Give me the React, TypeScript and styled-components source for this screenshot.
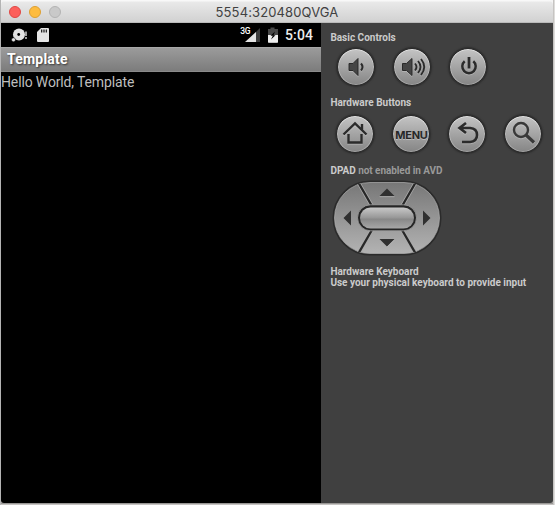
import React from "react";
import styled, { createGlobalStyle } from "styled-components";

const GlobalStyle = createGlobalStyle`
  html, body, #root { margin: 0; width: 555px; height: 505px; overflow: hidden; }
  body { background: #b9b8b6; font-family: Roboto, sans-serif; }
  * { box-sizing: border-box; }
  svg { display: block; }
`;

const Desktop = styled.div`
  width: 555px;
  height: 505px;
  padding: 0 2px 2px 1px;
  background: linear-gradient(90deg, #b4b4b4 0 1px, transparent 1px 553px, #c6c4c2 553px 554px, #dedddb 554px),
    linear-gradient(#f5f5f5 0 8px, #aaa8a6 12px 503px, #999795 503px 504px, #c5c3c1 504px);
`;

const Window = styled.main`
  height: 503px;
  display: flex;
  flex-direction: column;
  border-radius: 5px 5px 3px 3px;
  overflow: hidden;
`;

const TitleBar = styled.header`
  position: relative;
  flex: 0 0 23px;
  height: 23px;
  min-height: 0;
  display: flex;
  justify-content: center;
  line-height: 24px;
  background: linear-gradient(#f8f8f8 0 1px, #e9e9e9 2px, #d1d1d1 22px, #bababa 22px);
  color: #414141;
  font-family: Inter, sans-serif;
  font-size: 13px;
`;

const Lights = styled.div`
  position: absolute;
  left: 8px;
  top: 6px;
  display: flex;
  gap: 8px;
`;

const Light = styled.i<{ $fill: string; $edge: string }>`
  width: 12px;
  height: 12px;
  border-radius: 50%;
  background: ${(p) => p.$fill};
  border: 1px solid ${(p) => p.$edge};
`;

const WindowTitle = styled.span`
  letter-spacing: 0.12px;
`;

const Body = styled.div`
  flex: 1;
  display: flex;
`;

const Phone = styled.section`
  width: 320px;
  background: #000;
`;

const StatusBar = styled.div`
  height: 24px;
  display: flex;
  align-items: center;
  justify-content: space-between;
  padding: 0 8px 0 10px;
`;

const StatusGroup = styled.div`
  display: flex;
  align-items: center;
`;

const Clock = styled.span`
  margin-left: 6px;
  color: #ececec;
  font-size: 14px;
  font-weight: 500;
  line-height: 24px;
  letter-spacing: 0.1px;
`;

const AppTitle = styled.div`
  height: 25px;
  padding-left: 6px;
  line-height: 25px;
  color: #fff;
  font-size: 14px;
  font-weight: 700;
  letter-spacing: 0.2px;
  text-shadow: 1px 1px 2px #333;
  background: linear-gradient(#a8a8a8 0 1px, #9b9b9b 1px, #7c7c7c 24px, #8a8a8a 24px);
`;

const Message = styled.p`
  margin: 0;
  color: #bebebe;
  font-size: 14px;
  line-height: 20px;
  letter-spacing: -0.14px;
`;

const Controls = styled.aside`
  flex: 1;
  padding: 9px 0 0 9.4px;
  background: #404040;
  color: #cbcbcb;
  font-size: 10px;
  font-weight: 700;
  line-height: 12px;
`;

const Heading = styled.div`
  height: 12px;
  white-space: nowrap;
`;

const KeyboardNote = styled.div`
  line-height: 11px;
  white-space: nowrap;
`;

const Muted = styled.span`
  color: #999;
  font-weight: 700;
  letter-spacing: -0.07px;
`;

const ButtonRow = styled.div<{ $indent: number; $top: number; $bottom: number }>`
  display: flex;
  gap: 18px;
  padding: ${(p) => p.$top}px 0 ${(p) => p.$bottom}px ${(p) => p.$indent}px;
`;

const RoundButton = styled.button`
  flex: 0 0 38px;
  height: 38px;
  padding: 0;
  display: grid;
  place-items: center;
  border-radius: 50%;
  color: #272727;
  font: 700 11px Inter, sans-serif;
  background: linear-gradient(#c4c4c4, #858585) padding-box;
  border: 1px solid #2a2a2a;
  box-shadow: inset 0 0 0 1px #ffffff40, inset 0 1px 0 #ffffff60, 0 0 2px 0.5px #202020;
`;

const MenuLabel = styled.span`
  letter-spacing: -0.25px;
  line-height: 14px;
  padding-top: 2px;
  text-shadow: 0 1px 0 #bbb;
`;

const PadBlock = styled.div`
  padding: 2px 0 10px 0.6px;
`;

const GlyphSvg = styled.svg`
  filter: drop-shadow(0 1px 0 #ffffff38);
`;

const Glyph = ({ kind }: { kind: "low" | "high" | "power" | "home" | "back" | "search" }) => (
  <GlyphSvg width="36" height="36" viewBox="0 0 36 36" fill="none" stroke="#2b2b2b" strokeWidth="2">
    {kind === "low" && (
      <>
        <path d="M11 14.5h4l5-5v17l-5-5h-4z" fill="#454545" stroke="#292929" strokeWidth="1" />
        <path d="M23 14.5q3 3.5 0 7" />
      </>
    )}
    {kind === "high" && (
      <>
        <path d="M8.5 14.5h4l5.5-5v17l-5.5-5h-4z" fill="#454545" stroke="#292929" strokeWidth="1" />
        <path d="M21 14.5q3 3.5 0 7M24 12q5 6 0 12M27 10q6.5 8 0 16" strokeWidth="1.9" />
      </>
    )}
    {kind === "power" && (
      <>
        <path d="M14.7 12.3a6.7 6.7 0 1 0 8.6 0" strokeWidth="2.5" />
        <path d="M19 8v11.5" strokeWidth="2.8" />
      </>
    )}
    {kind === "home" && <path d="M6.5 18.5 18 7.5l11.5 11M11.5 18v8.5h13V18M25 8v5.5" strokeWidth="2.4" />}
    {kind === "back" && <path d="m17 7-6.5 5 6.5 5M11 12h10q7 .5 7 7t-7 7h-8" strokeWidth="2.6" />}
    {kind === "search" && (
      <>
        <circle cx="16" cy="14" r="7" strokeWidth="2.4" stroke="#393939" />
        <path d="m21 19 8 7.5" strokeWidth="3.2" stroke="#393939" />
      </>
    )}
  </GlyphSvg>
);

const DebugIcon = () => (
  <svg width="18" height="14" viewBox="0 0 18 14">
    <circle cx="8" cy="6.5" r="6" fill="#e2e2e2" />
    <circle cx="7.7" cy="6.5" r="1.4" fill="#000" />
    <circle cx="2.5" cy="11.8" r="2" fill="#e2e2e2" stroke="#000" strokeWidth=".5" />
    <path d="M15 3.5v4.5M15 9v2" stroke="#e2e2e2" strokeWidth="1.4" />
  </svg>
);

const CardIcon = () => (
  <svg width="22" height="14" viewBox="0 0 22 14">
    <path d="M12 0h7q1 0 1 1v12q0 1-1 1H9q-1 0-1-1V4z" fill="#e5e5e5" />
    <path d="M12.7 1.5v3M15 1.5v3M17.3 1.5v3" stroke="#111" strokeWidth="1.2" />
  </svg>
);

const NetworkLabel = styled.span`
  align-self: flex-start;
  margin: 3px -5px 0 0;
  color: #fff;
  font: 500 8.5px/10px Roboto, sans-serif;
  letter-spacing: -0.4px;
`;

const SignalIcon = () => (
  <svg width="16" height="14" viewBox="0 0 16 14">
    <path d="M15 0v14H1z" fill="#3c3c3c" />
    <path d="M11 4v10H0z" fill="#e3e3e3" />
  </svg>
);

const BatteryIcon = () => (
  <svg width="18" height="16" viewBox="0 0 18 16">
    <path d="M7 2h2.5V.5h4V2H17v13q0 .7-.7.7H7.7Q7 15.7 7 15z" fill="#484848" />
    <path d="M7 8h10v7q0 .7-.7.7H7.7Q7 15.7 7 15z" fill="#eee" />
    <path d="m14 4.5-4.5 4.3h2.3L10 12.5l4.5-4.3h-2z" fill="#000" />
  </svg>
);

const DPad = () => (
  <svg width="112" height="77" viewBox="0 0 112 77">
    <defs>
      <linearGradient id="padFace" x2="0" y2="1">
        <stop stopColor="#777" />
        <stop offset="1" stopColor="#b3b3b3" />
      </linearGradient>
      <linearGradient id="padCenter" x2="0" y2="1">
        <stop stopColor="#c8c8c8" />
        <stop offset=".5" stopColor="#969696" />
        <stop offset=".55" stopColor="#888" />
        <stop offset="1" stopColor="#a7a7a7" />
      </linearGradient>
      <clipPath id="padShape"><rect x="3" y="3" width="106" height="72" rx="36" /></clipPath>
    </defs>
    <rect x="2.5" y="2.5" width="107" height="73" rx="36.5" fill="#292929" stroke="#2b2b2b" strokeWidth="2" />
    <rect x="3.5" y="3.5" width="105" height="71" rx="35.5" fill="url(#padFace)" stroke="#b0b0b0" strokeWidth=".7" />
    <g clipPath="url(#padShape)" fill="none">
      <path d="m26.5 2 15 26M85.5 2l-15 26M26.5 76l15-26M85.5 76l-15-26" stroke="#a9a9a9" strokeWidth="3.8" />
      <path d="m26.5 2 15 26M85.5 2l-15 26M26.5 76l15-26M85.5 76l-15-26" stroke="#282828" strokeWidth="2.3" />
    </g>
    <rect x="26.5" y="25.8" width="59" height="26" rx="13" fill="#262626" stroke="#a4a4a4" strokeWidth=".8" />
    <rect x="29" y="28.5" width="54" height="21" rx="10.5" fill="url(#padCenter)" />
    <path d="m48.5 17 7.5-7.5 7.5 7.5zM48.5 60h15L56 67.5zM12.5 39l7.5-7.5v15zM99.5 39 92 31.5v15z" fill="#303030" />
    <path d="M48.5 17.7h15M56 68l7.5-7" stroke="#bcbcbc" strokeWidth=".6" />
  </svg>
);

export default function App() {
  return (
    <>
      <GlobalStyle />
      <Desktop>
        <Window>
          <TitleBar>
            <Lights>
              <Light $fill="#fc605c" $edge="#df4744" />
              <Light $fill="#fdbc40" $edge="#dda032" />
              <Light $fill="#c9c9c9" $edge="#b3b3b3" />
            </Lights>
            <WindowTitle>5554:320480QVGA</WindowTitle>
          </TitleBar>
          <Body>
            <Phone>
              <StatusBar>
                <StatusGroup><DebugIcon /><CardIcon /></StatusGroup>
                <StatusGroup>
                  <NetworkLabel>3G</NetworkLabel>
                  <SignalIcon />
                  <BatteryIcon />
                  <Clock>5:04</Clock>
                </StatusGroup>
              </StatusBar>
              <AppTitle>Template</AppTitle>
              <Message>Hello World, Template</Message>
            </Phone>
            <Controls>
              <Heading>Basic Controls</Heading>
              <ButtonRow $indent={7} $top={4} $bottom={11}>
                <RoundButton aria-label="Volume down"><Glyph kind="low" /></RoundButton>
                <RoundButton aria-label="Volume up"><Glyph kind="high" /></RoundButton>
                <RoundButton aria-label="Power"><Glyph kind="power" /></RoundButton>
              </ButtonRow>
              <Heading>Hardware Buttons</Heading>
              <ButtonRow $indent={6} $top={6} $bottom={12}>
                <RoundButton aria-label="Home"><Glyph kind="home" /></RoundButton>
                <RoundButton><MenuLabel>MENU</MenuLabel></RoundButton>
                <RoundButton aria-label="Back"><Glyph kind="back" /></RoundButton>
                <RoundButton aria-label="Search"><Glyph kind="search" /></RoundButton>
              </ButtonRow>
              <Heading>DPAD <Muted>not enabled in AVD</Muted></Heading>
              <PadBlock><DPad /></PadBlock>
              <KeyboardNote>Hardware Keyboard</KeyboardNote>
              <KeyboardNote>Use your physical keyboard to provide input</KeyboardNote>
            </Controls>
          </Body>
        </Window>
      </Desktop>
    </>
  );
}
